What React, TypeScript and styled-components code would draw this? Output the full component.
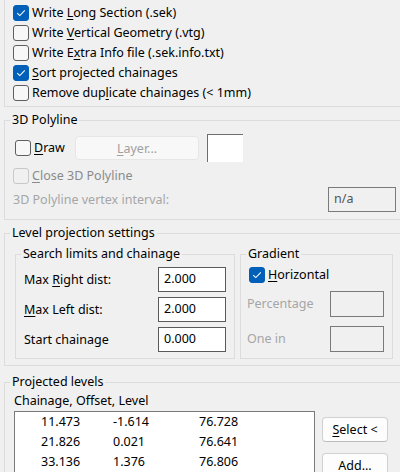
import React from 'react';
import styled, { createGlobalStyle } from 'styled-components';

const GlobalStyle = createGlobalStyle`
  html, body {
    margin: 0;
    padding: 0;
    background: #f0f0f0;
  }
  body {
    width: 400px;
    height: 472px;
    overflow: hidden;
    font-family: "Noto Sans", "Open Sans", sans-serif;
    font-size: 12.5px;
    color: #000;
  }
`;

const Page = styled.div`
  width: 440px;
  padding-left: 4px;
`;

interface IGroup {
  $clipTop?: boolean;
  $gap?: number;
  $width?: number;
}

const Group = styled.fieldset<IGroup>`
  margin: ${(p) => p.$gap ?? 0}px 0 0 0;
  padding: 0;
  min-width: 0;
  border: 1px solid #dcdcdc;
  border-top: ${(p) => (p.$clipTop ? 'none' : '1px solid #dcdcdc')};
  width: ${(p) => (p.$width ? `${p.$width}px` : 'auto')};
  box-sizing: border-box;
`;

const Legend = styled.legend`
  margin-left: 5px;
  padding: 0 2px;
  line-height: 16px;
`;

interface IBody {
  $pad: string;
}

const Body = styled.div<IBody>`
  padding: ${(p) => p.$pad};
`;

const CheckRow = styled.label<{ $indent?: number; $width?: number }>`
  display: flex;
  align-items: center;
  height: 20px;
  margin-left: ${(p) => p.$indent ?? 0}px;
  width: ${(p) => (p.$width ? `${p.$width}px` : 'auto')};
  flex-shrink: 0;
`;

const Box = styled.span<{ $checked?: boolean; $disabled?: boolean }>`
  display: inline-flex;
  align-items: center;
  justify-content: center;
  width: 16px;
  height: 16px;
  box-sizing: border-box;
  border-radius: 3px;
  margin-right: 3px;
  background: ${(p) => (p.$checked ? '#005fb8' : p.$disabled ? '#f0f0f0' : '#f7f7f7')};
  border: 1px solid ${(p) => (p.$checked ? '#005fb8' : p.$disabled ? '#c8c8c8' : '#5e5e5e')};
`;

const Caption = styled.span<{ $disabled?: boolean; $light?: boolean }>`
  color: ${(p) => (p.$light ? '#a6a6a6' : p.$disabled ? '#8a8a8a' : '#000')};
  white-space: nowrap;
  line-height: 16px;
`;

const Key = styled.span`
  text-decoration: underline;
  text-underline-offset: 2px;
`;

const Check = ({ checked }: { checked?: boolean }) =>
  checked ? (
    <svg width="10" height="8" viewBox="0 0 10 8">
      <path d="M1.2 4.2 L3.8 6.6 L8.8 1.4" fill="none" stroke="#fff" strokeWidth="1.1" />
    </svg>
  ) : null;

interface CheckboxProps {
  checked?: boolean;
  disabled?: boolean;
  children: React.ReactNode;
  indent?: number;
  width?: number;
}

const Checkbox = ({ checked, disabled, children, indent, width }: CheckboxProps) => (
  <CheckRow $indent={indent} $width={width}>
    <Box $checked={checked} $disabled={disabled}>
      <Check checked={checked} />
    </Box>
    <Caption $disabled={disabled}>{children}</Caption>
  </CheckRow>
);

const DrawRow = styled.div`
  display: flex;
  align-items: center;
  height: 28px;
`;

const LayerButton = styled.div`
  width: 124px;
  height: 24px;
  box-sizing: border-box;
  border: 1px solid #e6e6e6;
  border-radius: 4px;
  background: #f8f8f8;
  color: #a0a0a0;
  display: flex;
  align-items: center;
  justify-content: center;
  margin-right: 8px;
`;

const Swatch = styled.div`
  width: 36px;
  height: 28px;
  box-sizing: border-box;
  background: #fff;
  border-top: 1px solid #6e6e6e;
  border-left: 1px solid #6e6e6e;
`;

const SpacedRow = styled.div<{ $top?: number }>`
  margin-top: ${(p) => p.$top ?? 0}px;
`;

const FieldRow = styled.div<{ $cols: string; $height: number; $top?: number }>`
  display: grid;
  grid-template-columns: ${(p) => p.$cols};
  align-items: center;
  height: ${(p) => p.$height}px;
  margin-top: ${(p) => p.$top ?? 0}px;
`;

const Field = styled.div<{ $disabled?: boolean; $width: number; $height: number }>`
  width: ${(p) => p.$width}px;
  height: ${(p) => p.$height}px;
  box-sizing: border-box;
  border: 1px solid ${(p) => (p.$disabled ? '#7a7a7a' : '#5a5a5a')};
  background: ${(p) => (p.$disabled ? '#f0f0f0' : '#fff')};
  color: ${(p) => (p.$disabled ? '#555' : '#000')};
  padding: 3px 5px 0;
  line-height: 16px;
`;

const Split = styled.div`
  display: flex;
  gap: 5px;
`;

const ListArea = styled.div`
  display: flex;
  align-items: flex-start;
  margin-top: 2px;
`;

const List = styled.div`
  width: 301px;
  height: 80px;
  box-sizing: border-box;
  border: 1px solid #7a7a7a;
  background: #fff;
  padding: 0 0 0 26px;
`;

const ListRow = styled.div`
  display: grid;
  grid-template-columns: 72px 86px auto;
  height: 20px;
  align-items: center;
  line-height: 16px;
`;

const Buttons = styled.div`
  display: flex;
  flex-direction: column;
  gap: 11px;
  margin: 6px 0 0 7px;
`;

const Button = styled.div`
  width: 66px;
  height: 25px;
  box-sizing: border-box;
  border: 1px solid #d0d0d0;
  border-bottom-color: #bcbcbc;
  border-radius: 4px;
  background: #fdfdfd;
  display: flex;
  align-items: center;
  justify-content: center;
`;

const rows = [
  ['11.473', '-1.614', '76.728'],
  ['21.826', '0.021', '76.641'],
  ['33.136', '1.376', '76.806'],
];

export default function App() {
  return (
    <Page>
      <GlobalStyle />
      <Group $clipTop>
        <Body $pad="3px 0 3px 8px">
          <Checkbox checked>
            Write <Key>L</Key>ong Section (.sek)
          </Checkbox>
          <Checkbox>
            Write <Key>V</Key>ertical Geometry (.vtg)
          </Checkbox>
          <Checkbox>
            Write E<Key>x</Key>tra Info file (.sek.info.txt)
          </Checkbox>
          <Checkbox checked>
            <Key>S</Key>ort projected chainages
          </Checkbox>
          <Checkbox>
            Remove dup<Key>l</Key>icate chainages (&lt; 1mm)
          </Checkbox>
        </Body>
      </Group>

      <Group $gap={5}>
        <Legend>3D Polyline</Legend>
        <Body $pad="6px 0 7px 8px">
          <DrawRow>
            <Checkbox indent={2} width={60}>
              <Key>D</Key>raw
            </Checkbox>
            <LayerButton>
              <span>
                <Key>L</Key>ayer...
              </span>
            </LayerButton>
            <Swatch />
          </DrawRow>
          <SpacedRow $top={4}>
            <Checkbox disabled>
              <Key>C</Key>lose 3D Polyline
            </Checkbox>
          </SpacedRow>
          <FieldRow $cols="315px 68px" $height={25} $top={1}>
            <Caption $light>3D Polyline vertex interval:</Caption>
            <Field $disabled $width={68} $height={25}>
              n/a
            </Field>
          </FieldRow>
        </Body>
      </Group>

      <Group $gap={5}>
        <Legend>Level projection settings</Legend>
        <Body $pad="5px 0 6px 10px">
          <Split>
            <Group $width={220}>
              <Legend>Search limits and chainage</Legend>
              <Body $pad="5px 8px 6px 8px">
                <FieldRow $cols="1fr 68px" $height={25}>
                  <Caption>
                    Max <Key>R</Key>ight dist:
                  </Caption>
                  <Field $width={68} $height={25}>2.000</Field>
                </FieldRow>
                <FieldRow $cols="1fr 68px" $height={25} $top={5}>
                  <Caption>
                    <Key>M</Key>ax Left dist:
                  </Caption>
                  <Field $width={68} $height={25}>2.000</Field>
                </FieldRow>
                <FieldRow $cols="1fr 68px" $height={25} $top={5}>
                  <Caption>Start chainage</Caption>
                  <Field $width={68} $height={25}>0.000</Field>
                </FieldRow>
              </Body>
            </Group>
            <Group $width={153}>
              <Legend>Gradient</Legend>
              <Body $pad="3px 8px 6px 6px">
                <Checkbox checked indent={2}>
                  <Key>H</Key>orizontal
                </Checkbox>
                <FieldRow $cols="1fr 54px" $height={26} $top={6}>
                  <Caption $light>Percentage</Caption>
                  <Field $disabled $width={54} $height={26} />
                </FieldRow>
                <FieldRow $cols="1fr 54px" $height={26} $top={9}>
                  <Caption $light>One in</Caption>
                  <Field $disabled $width={54} $height={26} />
                </FieldRow>
              </Body>
            </Group>
          </Split>
        </Body>
      </Group>

      <Group $gap={8}>
        <Legend>Projected levels</Legend>
        <Body $pad="2px 0 0 9px">
          <Caption>Chainage, Offset, Level</Caption>
          <ListArea>
            <List>
              {rows.map((r) => (
                <ListRow key={r[0]}>
                  {r.map((c, i) => (
                    <span key={i}>{c}</span>
                  ))}
                </ListRow>
              ))}
            </List>
            <Buttons>
              <Button>
                <span>
                  <Key>S</Key>elect &lt;
                </span>
              </Button>
              <Button>Add...</Button>
            </Buttons>
          </ListArea>
        </Body>
      </Group>
    </Page>
  );
}
